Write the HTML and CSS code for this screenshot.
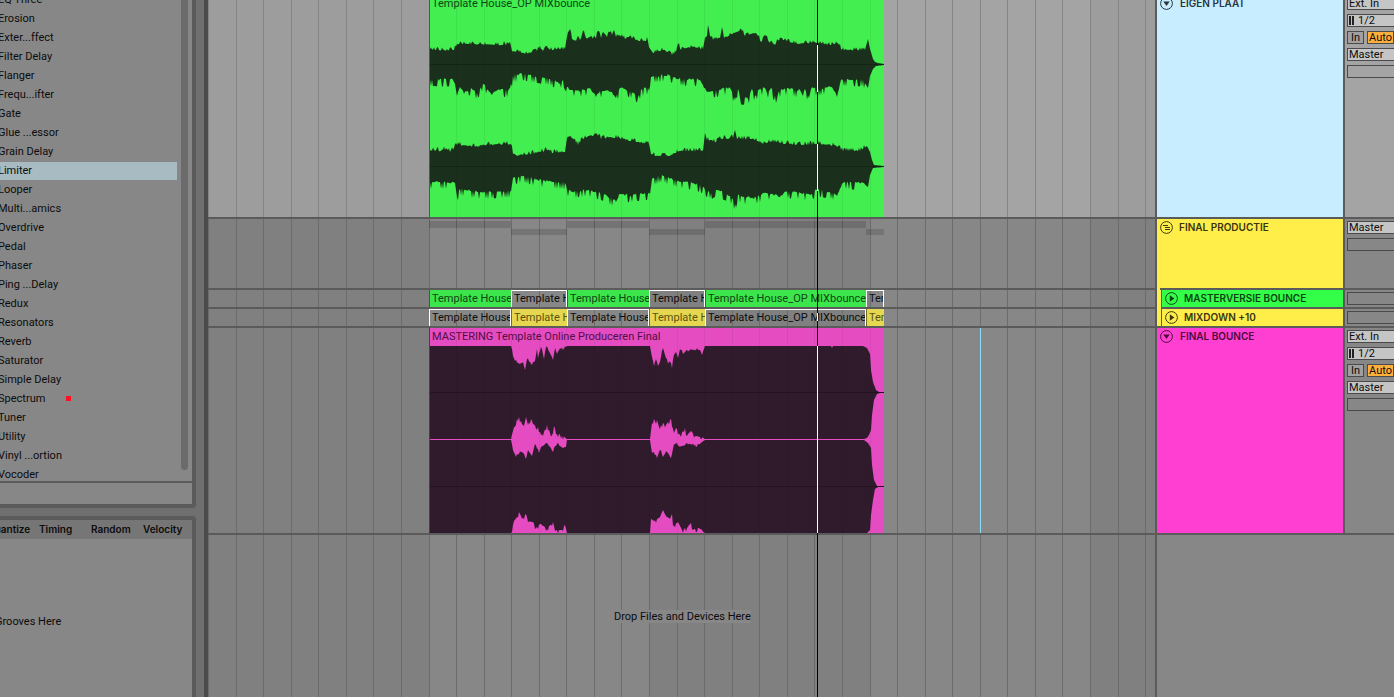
FILE: index.html
```html
<!DOCTYPE html>
<html lang="en">
<head>
    <meta charset="UTF-8">
    <meta name="viewport" content="width=device-width, initial-scale=1.0">
    <title>Arrangement</title>
    <link rel="stylesheet" href="styles.css">
</head>
<body>
    <aside class="sidebar">
        <section class="panel browser">
            <div class="browser-main">
                <ul class="device-list">
                    <li>EQ Three</li>
                    <li>Erosion</li>
                    <li>Exter...ffect</li>
                    <li>Filter Delay</li>
                    <li>Flanger</li>
                    <li>Frequ...ifter</li>
                    <li>Gate</li>
                    <li>Glue ...essor</li>
                    <li>Grain Delay</li>
                    <li class="selected">Limiter</li>
                    <li>Looper</li>
                    <li>Multi...amics</li>
                    <li>Overdrive</li>
                    <li>Pedal</li>
                    <li>Phaser</li>
                    <li>Ping ...Delay</li>
                    <li>Redux</li>
                    <li>Resonators</li>
                    <li>Reverb</li>
                    <li>Saturator</li>
                    <li>Simple Delay</li>
                    <li>Spectrum <span class="tag"></span></li>
                    <li>Tuner</li>
                    <li>Utility</li>
                    <li>Vinyl ...ortion</li>
                    <li>Vocoder</li>
                </ul>
                <div class="scrollbar"></div>
            </div>
            <div class="browser-foot"></div>
        </section>
        <section class="panel grooves">
            <div class="groove-head">
                <span>Quantize</span>
                <span>Timing</span>
                <span>Random</span>
                <span>Velocity</span>
            </div>
            <p class="groove-drop">Grooves Here</p>
        </section>
    </aside>

    <main class="arrangement">
        <div class="track track-light">
            <div class="lane">
                <svg class="grid"></svg>
                <div class="clip clip-audio green">
                    <div class="clip-name">Template House_OP MIXbounce</div>
                    <svg class="wave" id="waveMix" viewBox="0 -5 455 222" preserveAspectRatio="none"></svg>
                </div>
            </div>
            <div class="head blue">
                <div class="head-inner">
                    <svg class="icon" viewBox="0 0 13 13"><circle cx="6.5" cy="6.5" r="5.9"/><path class="solid" d="M3.3 4.6h6.4L6.5 9z"/></svg>
                    <span>EIGEN PLAAT</span>
                </div>
            </div>
            <div class="io">
                <select aria-label="Input type"><option>Ext. In</option></select>
                <div class="channel"><select aria-label="Input channel"><option>1/2</option></select></div>
                <div class="monitor"><button type="button">In</button><button type="button" class="on">Auto</button></div>
                <select aria-label="Output"><option>Master</option></select>
                <div class="blank"></div>
            </div>
        </div>

        <div class="track track-group">
            <div class="lane">
                <svg class="grid"></svg>
                <div class="overview">
                    <i class="w82"></i><i class="w56 low"></i><i class="w82"></i><i class="w56 low"></i><i class="w161"></i><i class="w18 low"></i>
                </div>
            </div>
            <div class="head yellow in-group">
                <div class="head-inner">
                    <svg class="icon" viewBox="0 0 13 13"><circle cx="6.5" cy="6.5" r="5.9"/><path d="M3 4.5h5M5 6.5h5M5 8.5h5"/></svg>
                    <span>FINAL PRODUCTIE</span>
                </div>
            </div>
            <div class="io">
                <select aria-label="Output"><option>Master</option></select>
                <div class="blank"></div>
            </div>
        </div>

        <div class="track track-small">
            <div class="lane">
                <svg class="grid"></svg>
                <div class="clip green w82">Template House_OP MIXbounce</div>
                <div class="clip ghost w56">Template House_OP MIXbounce</div>
                <div class="clip green w82">Template House_OP MIXbounce</div>
                <div class="clip ghost w56">Template House_OP MIXbounce</div>
                <div class="clip green w161">Template House_OP MIXbounce</div>
                <div class="clip ghost w18">Template House_OP MIXbounce</div>
            </div>
            <div class="head yellow in-group">
                <div class="head-inner nested lime">
                    <svg class="icon" viewBox="0 0 13 13"><circle cx="6.5" cy="6.5" r="5.9"/><path class="solid" d="M4.8 3.2v6.6L9.4 6.5z"/></svg>
                    <span>MASTERVERSIE BOUNCE</span>
                </div>
            </div>
            <div class="io"><div class="blank"></div></div>
        </div>

        <div class="track track-small">
            <div class="lane">
                <svg class="grid"></svg>
                <div class="clip ghost w82">Template House_OP MIXbounce</div>
                <div class="clip gold w56">Template House_OP MIXbounce</div>
                <div class="clip ghost w82">Template House_OP MIXbounce</div>
                <div class="clip gold w56">Template House_OP MIXbounce</div>
                <div class="clip ghost w161">Template House_OP MIXbounce</div>
                <div class="clip gold w18">Template House_OP MIXbounce</div>
            </div>
            <div class="head yellow">
                <div class="head-inner nested">
                    <svg class="icon" viewBox="0 0 13 13"><circle cx="6.5" cy="6.5" r="5.9"/><path class="solid" d="M4.8 3.2v6.6L9.4 6.5z"/></svg>
                    <span>MIXDOWN +10</span>
                </div>
            </div>
            <div class="io"><div class="blank"></div></div>
        </div>

        <div class="track track-master">
            <div class="lane">
                <svg class="grid"></svg>
                <div class="clip clip-audio pink">
                    <div class="clip-name">MASTERING Template Online Produceren Final</div>
                    <svg class="wave" id="waveMaster" viewBox="0 328 455 205" preserveAspectRatio="none"></svg>
                </div>
                <div class="insert-mark"></div>
            </div>
            <div class="head magenta">
                <div class="head-inner">
                    <svg class="icon" viewBox="0 0 13 13"><circle cx="6.5" cy="6.5" r="5.9"/><path class="solid" d="M3.3 4.6h6.4L6.5 9z"/></svg>
                    <span>FINAL BOUNCE</span>
                </div>
            </div>
            <div class="io">
                <select aria-label="Input type"><option>Ext. In</option></select>
                <div class="channel"><select aria-label="Input channel"><option>1/2</option></select></div>
                <div class="monitor"><button type="button">In</button><button type="button" class="on">Auto</button></div>
                <select aria-label="Output"><option>Master</option></select>
                <div class="blank"></div>
            </div>
        </div>

        <div class="track track-empty">
            <div class="lane">
                <svg class="grid"></svg>
                <p class="drop-hint"><span>Drop Files and Devices Here</span></p>
            </div>
            <div class="rest"></div>
        </div>

        <svg class="playhead">
            <path class="line" d="M0 0V2000"/>
            <path class="over-wave" d="M0 50V97M0 149V196M0 318V326M0 351V538"/>
        </svg>
    </main>
    <script src="script.js"></script>
</body>
</html>
```
FILE: styles.css
```css
:root {
    --line: #5b5b5b;
    --panel: #878787;
    --frame: #6f6f6f;
}
* { box-sizing: border-box; }
body {
    margin: 0;
    height: 100vh;
    display: flex;
    overflow: hidden;
    background: var(--frame);
    color: #0c0c0c;
    font-family: Roboto, "Liberation Sans", sans-serif;
    font-size: 11px;
    line-height: 18px;
}

/* left side */
.sidebar {
    width: 208px;
    flex: none;
    display: flex;
    flex-direction: column;
    gap: 8px;
    padding-right: 8px;
    border-right: 4px solid #4b4b4b;
}
.panel {
    background: var(--panel);
    border-right: 4px solid var(--line);
    overflow: hidden;
}
.browser {
    height: 508px;
    flex: none;
    display: flex;
    flex-direction: column;
    border-bottom: 4px solid var(--line);
    border-bottom-right-radius: 4px;
}
.browser-main {
    flex: 1;
    min-height: 0;
    display: flex;
    gap: 4px;
    padding-right: 4px;
    overflow: hidden;
}
.device-list {
    flex: 1;
    list-style: none;
    margin: -9px 0 0;
    padding: 0;
}
.device-list li {
    height: 18px;
    margin-bottom: 1px;
    text-indent: -2px;
    white-space: nowrap;
}
.device-list .selected {
    background: #a8bbc2;
}
.tag {
    display: inline-block;
    width: 5px;
    height: 5px;
    margin-left: 18px;
    vertical-align: 1px;
    background: #ff1020;
}
.scrollbar {
    width: 7px;
    height: 470px;
    background: #6b6b6b;
    border-radius: 0 0 4px 4px;
}
.browser-foot {
    height: 23px;
    border-top: 2px solid var(--line);
}
.grooves {
    flex: 1;
    border-top: 4px solid var(--line);
    border-top-right-radius: 4px;
}
.groove-head {
    height: 19px;
    display: flex;
    padding-right: 9px;
    margin-left: -13px;
    background: #767676;
    font: 600 10px/19px Inter, "Liberation Sans", sans-serif;
}
.groove-head span {
    flex: none;
    width: 52px;
}
.groove-drop {
    margin: 74px 0 0 -5px;
}

/* tracks */
.arrangement {
    flex: 1;
    min-width: 0;
    display: flex;
    flex-direction: column;
    position: relative;
    margin-top: -5px;
    overflow: hidden;
}
.track {
    display: flex;
    flex: none;
}
.track-light { height: 224px; }
.track-group { height: 71px; }
.track-small { height: 19px; }
.track-master { height: 207px; }
.track-empty { flex: 1; }
.lane {
    flex: 1;
    min-width: 0;
    display: flex;
    position: relative;
    padding-left: 221px;
    border-bottom: 2px solid var(--line);
    background: var(--panel);
    overflow: hidden;
}
.track-empty .lane {
    border-bottom: 0;
}
.grid {
    position: absolute;
    left: 0;
    top: 0;
    width: 100%;
    height: 100%;
}
.grid .band { fill: #808080; }
.grid .bars { stroke: #6c6c6c; }
.track-light .lane { background: #a4a4a4; }
.track-light .band { fill: #9d9d9d; }
.track-light .bars { stroke: #858585; }

.clip {
    position: relative;
    flex: none;
    height: 100%;
    padding-left: 2px;
    overflow: hidden;
    white-space: nowrap;
    line-height: 17px;
    border-left: 1px solid rgba(0, 0, 0, 0.5);
}
.clip.green { background: #42ee50; color: #0d4713; }
.track-small .green { background: #3de54c; }
.clip.gold { background: #e5d74f; color: #5a5312; }
.clip.pink { background: #e54cc2; color: #520f43; }
.clip.ghost {
    border: 1px solid #fff;
    border-bottom: 0;
    line-height: 16px;
}
.clip-audio {
    width: 455px;
    padding-left: 0;
}
.clip-name {
    padding-left: 2px;
    line-height: 18px;
}
.wave {
    position: absolute;
    left: -1px;
    top: 0;
    width: 455px;
    height: 100%;
}
.green .shape { fill: #1b301c; }
.pink .shape { fill: #301b2c; }
.wave .axis { stroke: #000; stroke-opacity: 0.25; }
.wave .zero { stroke: #e54cc2; }
.wave .beats { stroke: #000; stroke-opacity: 0.06; }
.w82 { width: 82px; }
.w56 { width: 56px; }
.w161 { width: 161px; }
.w18 { width: 18px; }

.overview {
    position: relative;
    display: flex;
    padding-top: 2px;
}
.overview i {
    height: 7px;
    background: rgba(0, 0, 0, 0.14);
}
.overview .low {
    height: 6px;
    margin-top: 8px;
}
.insert-mark {
    position: relative;
    width: 1px;
    margin-left: 96px;
    background: #8cdcf6;
}
.drop-hint {
    position: relative;
    flex: 1;
    margin: 73px 0 0;
    padding-left: 185px;
}
.drop-hint span {
    background: var(--panel);
}

/* track headers */
.head {
    width: 190px;
    flex: none;
    border: solid var(--line);
    border-width: 0 2px 2px;
    font-family: Inter, "Liberation Sans", sans-serif;
    font-weight: 600;
    font-size: 10px;
}
.head-inner {
    height: 100%;
    display: flex;
    align-items: flex-start;
    gap: 7px;
    padding: 0 3px;
    line-height: 16px;
}
.blue { background: #c8edff; color: #28343a; }
.yellow { background: #ffee4a; color: #3a3610; }
.magenta { background: #ff3fd2; color: #4a0c3c; }
.in-group {
    border-bottom: 0;
}
.in-group .head-inner {
    margin-left: 3px;
    padding-left: 0;
    gap: 6px;
    border-bottom: 2px solid var(--line);
}
.head .nested {
    margin-left: 4px;
    padding-left: 3px;
    gap: 6px;
    border-left: 1px solid var(--line);
}
.lime { background: #33ff48; color: #0b4512; }
.icon {
    width: 13px;
    height: 13px;
    flex: none;
    margin-top: 2px;
    fill: none;
    stroke: currentColor;
}
.icon .solid {
    fill: currentColor;
    stroke: none;
}

/* in / out */
.io {
    width: 49px;
    flex: none;
    display: flex;
    flex-direction: column;
    gap: 4px;
    padding: 2px 0 0 2px;
    border-bottom: 2px solid var(--line);
    background: var(--panel);
    overflow: hidden;
}
.track-light .io { background: #a4a4a4; }
.io select, .io button, .blank {
    height: 13px;
    flex: none;
    margin: 0;
    border: 1px solid #4a4a4a;
    border-radius: 0;
    color: #0c0c0c;
    font: 11px/11px Roboto, "Liberation Sans", sans-serif;
}
.io select {
    width: 100px;
    padding: 0 1px;
    appearance: none;
    background: #c5c5c5;
}
.channel {
    position: relative;
    height: 13px;
}
.io .channel select {
    display: block;
    padding-left: 10px;
}
.channel::before {
    content: "";
    position: absolute;
    left: 2px;
    top: 2px;
    width: 5px;
    height: 9px;
    background: linear-gradient(90deg, #222 2px, transparent 2px, transparent 3px, #222 3px);
}
.monitor {
    display: flex;
    gap: 3px;
}
.io button {
    width: 17px;
    padding: 0;
    background: #a0a0a0;
}
.io button.on {
    width: 27px;
    background: #ffb03c;
}
.blank {
    width: 100px;
}
.rest {
    width: 239px;
    border-left: 2px solid var(--line);
    background: var(--panel);
}

.playhead {
    position: absolute;
    left: 609px;
    top: 0;
    width: 1px;
    height: 100%;
    pointer-events: none;
}
.playhead path { stroke-width: 2px; }
.playhead .line { stroke: #000; }
.playhead .over-wave { stroke: #fff; }
```
FILE: script.js
```js
// start of the song inside the lane and distance between two bar lines
const SONG_START = 221;
const BAR = 441 / 16;

// bar lines and the darker blocks of 8 bars
document.querySelectorAll('.grid').forEach(grid => {
    let bands = '';
    let lines = '';
    for (let i = -8; i < 80; i++) {
        const x = Math.floor(SONG_START + i * BAR);
        lines += `M${x + 0.5} 0V2000`;
        if (i % 16 === 8 || i === -8) {
            bands += `<rect class="band" x="${x}" y="0" width="221" height="2000"/>`;
        }
    }
    grid.innerHTML = bands + `<path class="bars" d="${lines}"/>`;
});

let seed = 7;
function noise() {
    seed = (seed * 16807) % 2147483647;
    return seed / 2147483647 - 0.5;
}

// points: x,y pairs, straight between them, with a rough edge of the given size
// dir is the side the peaks point to, every third pixel or so gets one
function edge(points, rough, dir) {
    const p = points.trim().split(/\s+/).map(s => s.split(',').map(Number));
    const out = [];
    for (let i = 0; i < p.length - 1; i++) {
        const [x0, y0] = p[i];
        const [x1, y1] = p[i + 1];
        for (let x = x0; x < x1; x += 1) {
            let y = y0 + (y1 - y0) * (x - x0) / (x1 - x0);
            if (x !== x0 && x < 436) {
                const n = noise();
                y += n * rough + (n > 0.22 ? dir * rough * 1.6 : 0);
            }
            out.push([x, y.toFixed(1)]);
        }
    }
    out.push(p[p.length - 1]);
    return out;
}

function channel(top, bottom, roughTop, roughBottom) {
    const a = edge(top, roughTop, -1);
    const b = edge(bottom, roughBottom, 1).reverse();
    return `<path class="shape" d="M${a.concat(b).map(q => q.join(' ')).join('L')}Z"/>`;
}

function beats() {
    let d = '';
    for (let i = 1; i < 17; i++) d += `M${Math.floor(i * BAR) + 0.5} -5V600`;
    return `<path class="beats" d="${d}"/>`;
}

document.getElementById('waveMix').innerHTML =
    channel(
        `0,50 25,50 28,44 74,45 75,41 77,45 81,42 83,51 96,54 108,51 110,48 114,51 117,46 121,50 136,49 138,37 141,29 143,39 147,41 149,36 151,40 155,31 157,38
         167,38 169,31 172,38 175,33 178,37 182,31 183,35 185,30 187,37 190,35 196,39 199,37 210,41 217,41 218,37 220,47 224,53 235,50 243,55 247,52 249,44 252,50 264,47 274,49
         276,38 278,36 279,25 281,36 284,40 291,38 293,27 295,38 306,33 313,31 316,36 321,34 327,33 329,36 332,42 337,36 340,42 346,45 349,40 358,41 368,44 379,43 388,43
         401,45 409,43 413,50 436,50 439,39 441,49 444,59 446,62 449,63 455,64`,
        `0,80 24,80 26,84 28,96 31,87 35,94 42,88 48,93 54,84 63,95 69,90 79,91 81,88 84,76 93,74 104,76 121,79 130,84 134,80 138,87 141,90 151,91 161,88 167,97 171,91
         182,92 187,98 191,88 203,92 209,97 212,90 219,88 222,77 241,75 248,79 271,80 275,88 278,92 301,88 306,100 309,89 311,98 319,99 323,89 326,96 330,90 336,88 338,93
         342,88 348,99 350,91 358,88 368,91 371,90 374,96 376,89 380,98 383,87 388,90 398,87 404,89 408,97 412,80 434,80 439,88 441,76 444,69 447,66 455,65`, 2, 3.2) +
    channel(
        `0,150 11,151 18,149 21,152 28,145 46,147 57,145 82,144 84,154 88,156 101,154 111,152 119,150 123,153 136,152 138,138 141,136 149,145 154,139 168,134 172,139
         181,137 197,140 207,142 220,144 222,154 227,156 241,156 246,153 254,151 274,151 276,133 278,140 287,142 292,139 304,138 306,130 308,139 321,139 329,141 334,144
         341,142 352,143 367,145 388,144 407,146 414,151 431,151 438,146 441,152 443,160 445,165 455,166`,
        `0,182 26,183 28,197 31,189 41,191 54,193 62,192 72,192 82,191 84,178 94,176 107,180 124,182 136,183 138,190 144,192 157,190 171,193 179,197 187,202 191,194
         201,196 211,194 221,194 223,179 234,176 241,179 251,182 264,183 274,187 276,190 282,193 287,190 301,196 306,204 309,195 317,198 327,198 337,193 351,197 357,192
         371,193 381,195 388,190 401,192 408,196 412,187 414,183 434,183 439,187 441,175 444,168 455,167`, 2.4, 3.2) +
    '<path class="axis" d="M0 64.5H455M0 166.5H455"/>' + beats();

document.getElementById('waveMaster').innerHTML =
    channel(
        '0,346 82,346',
        '0,439 82,439', 0, 0) +
    channel(
        `82,346 84,356 86,361 91,364 94,362 96,370 98,359 103,365 106,361 108,349 109,358 112,347 115,359 117,347 121,353 124,360 126,348 128,354 131,348 134,350 138,346`,
        `82,439 85,427 88,419 90,417 93,424 95,426 97,417 99,425 102,419 104,424 109,427 112,435 115,432 118,425 121,433 123,435 125,426 128,434 133,436 138,439`, 1.5, 1.5) +
    channel('138,346 221,346', '138,439 221,439', 0, 0) +
    channel(
        `221,346 223,357 225,366 227,359 229,366 231,362 234,348 236,355 239,364 241,362 243,368 245,355 247,352 249,358 251,349 254,354 261,350 271,350 273,355 276,346`,
        `221,439 223,423 225,419 227,424 228,420 230,427 234,423 237,425 242,419 245,433 247,428 251,435 256,428 258,436 262,431 266,436 276,439`, 1.5, 1.5) +
    channel(
        '276,346 402,346 403,348 404,346 434,346 438,348 441,354 442,370 444,382 447,390 450,392 455,392',
        '276,439 435,439 438,438 440,435 442,430 443,415 445,400 448,394 451,393 455,393', 0, 0) +
    channel('0,440 82,440', '0,533 82,533', 0, 0) +
    channel(
        `82,440 84,450 87,457 90,454 93,452 97,459 99,450 103,456 106,444 110,453 112,447 118,443 124,452 128,444 134,448 137,447 138,440`,
        `82,533 85,521 88,517 90,512 93,519 97,514 99,522 104,522 107,528 111,524 118,529 124,522 126,531 133,530 136,525 138,533`, 1.5, 1.5) +
    channel('138,440 221,440', '138,533 221,533', 0, 0) +
    channel(
        `221,440 223,453 226,455 228,458 231,450 234,457 238,452 242,458 245,444 251,447 261,444 267,447 276,440`,
        `221,533 222,519 225,521 231,517 234,510 237,516 241,519 243,514 244,526 249,522 253,530 258,528 262,523 264,530 270,528 276,533`, 1.5, 1.5) +
    channel(
        '276,440 435,440 439,443 442,448 443,465 445,480 448,486 455,486',
        '276,533 438,533 441,530 442,515 444,500 446,489 449,487 455,487', 0, 0) +
    '<path class="axis" d="M0 392.5H455M0 486.5H455"/>' + beats() +
    '<path class="zero" d="M0 439.5H455"/>';
```
